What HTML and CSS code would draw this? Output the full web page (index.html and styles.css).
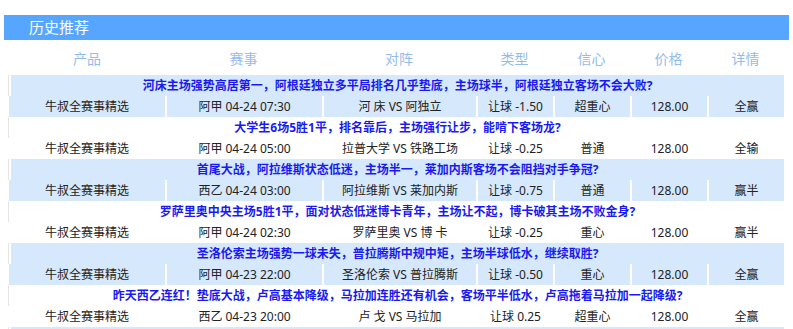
FILE: index.html
```html
<!DOCTYPE html>
<html lang="zh-CN">
<head>
<meta charset="utf-8">
<title>历史推荐</title>
<link rel="stylesheet" href="styles.css">
</head>
<body>
<div class="page">
  <div class="bar">历史推荐</div>
  <div class="table-wrap">
    <table class="history">
      <colgroup>
        <col class="c-prod"><col class="c-match"><col class="c-vs"><col class="c-sm"><col class="c-sm"><col class="c-sm"><col class="c-sm">
      </colgroup>
      <thead>
        <tr><th>产品</th><th>赛事</th><th>对阵</th><th>类型</th><th>信心</th><th>价格</th><th>详情</th></tr>
      </thead>
      <tbody class="blue">
        <tr><td class="title" colspan="7">河床主场强势高居第一，阿根廷独立多平局排名几乎垫底，主场球半，阿根廷独立客场不会大败?</td></tr>
        <tr><td>牛叔全赛事精选</td><td>阿甲 04-24 07:30</td><td>河 床 VS 阿独立</td><td>让球 -1.50</td><td>超重心</td><td>128.00</td><td>全赢</td></tr>
      </tbody>
      <tbody>
        <tr><td class="title" colspan="7">大学生6场5胜1平，排名靠后，主场强行让步，能啃下客场龙?</td></tr>
        <tr><td>牛叔全赛事精选</td><td>阿甲 04-24 05:00</td><td>拉普大学 VS 铁路工场</td><td>让球 -0.25</td><td>普通</td><td>128.00</td><td>全输</td></tr>
      </tbody>
      <tbody class="blue">
        <tr><td class="title" colspan="7">首尾大战，阿拉维斯状态低迷，主场半一，莱加内斯客场不会阻挡对手争冠?</td></tr>
        <tr><td>牛叔全赛事精选</td><td>西乙 04-24 03:00</td><td>阿拉维斯 VS 莱加内斯</td><td>让球 -0.75</td><td>普通</td><td>128.00</td><td>赢半</td></tr>
      </tbody>
      <tbody>
        <tr><td class="title" colspan="7">罗萨里奥中央主场5胜1平，面对状态低迷博卡青年，主场让不起，博卡破其主场不败金身?</td></tr>
        <tr><td>牛叔全赛事精选</td><td>阿甲 04-24 02:30</td><td>罗萨里奥 VS 博 卡</td><td>让球 -0.25</td><td>重心</td><td>128.00</td><td>赢半</td></tr>
      </tbody>
      <tbody class="blue">
        <tr><td class="title" colspan="7">圣洛伦索主场强势一球未失，普拉腾斯中规中矩，主场半球低水，继续取胜?</td></tr>
        <tr><td>牛叔全赛事精选</td><td>阿甲 04-23 22:00</td><td>圣洛伦索 VS 普拉腾斯</td><td>让球 -0.50</td><td>重心</td><td>128.00</td><td>全赢</td></tr>
      </tbody>
      <tbody>
        <tr><td class="title" colspan="7">昨天西乙连红！垫底大战，卢高基本降级，马拉加连胜还有机会，客场平半低水，卢高拖着马拉加一起降级?</td></tr>
        <tr><td>牛叔全赛事精选</td><td>西乙 04-23 20:00</td><td>卢 戈 VS 马拉加</td><td>让球 0.25</td><td>超重心</td><td>128.00</td><td>全赢</td></tr>
      </tbody>
      <tbody class="blue">
        <tr><td class="title" colspan="7">&nbsp;</td></tr>
      </tbody>
    </table>
  </div>
</div>
</body>
</html>
```
FILE: styles.css
```css
html, body {
  margin: 0;
  padding: 0;
  background: #fff;
}
body {
  overflow: hidden;
  font-family: "Noto Sans", "Noto Sans CJK SC", sans-serif;
  color: #222;
}
.page {
  padding: 15px 4px 0;
}
.bar {
  height: 25px;
  line-height: 25px;
  background: #56a6ff;
  color: #fff;
  font-size: 15px;
  padding-left: 25px;
}
.table-wrap {
  padding: 0 5px;
}
.history {
  width: 775px;
  table-layout: fixed;
  border-collapse: separate;
  border-spacing: 0;
  font-size: 12px;
}
.c-prod { width: 156px; }
.c-match { width: 157px; }
.c-vs { width: 154px; }
.c-sm { width: 77px; }
.history th {
  height: 35px;
  padding: 0;
  font-weight: normal;
  font-size: 14px;
  color: #93bcec;
  text-align: center;
  vertical-align: middle;
}
.history td {
  height: 21px;
  line-height: 21px;
  padding: 0;
  text-align: center;
  white-space: nowrap;
  border-left: 2px solid #fff;
}
.history td:first-child {
  border-left: 0;
}
.history td.title {
  border-left: 2px solid #fff;
  box-shadow: -1px 0 0 #e4e4e4;
  font-weight: bold;
  color: #1a1af0;
}
.history .blue td {
  background: #d6e9fc;
}
```
